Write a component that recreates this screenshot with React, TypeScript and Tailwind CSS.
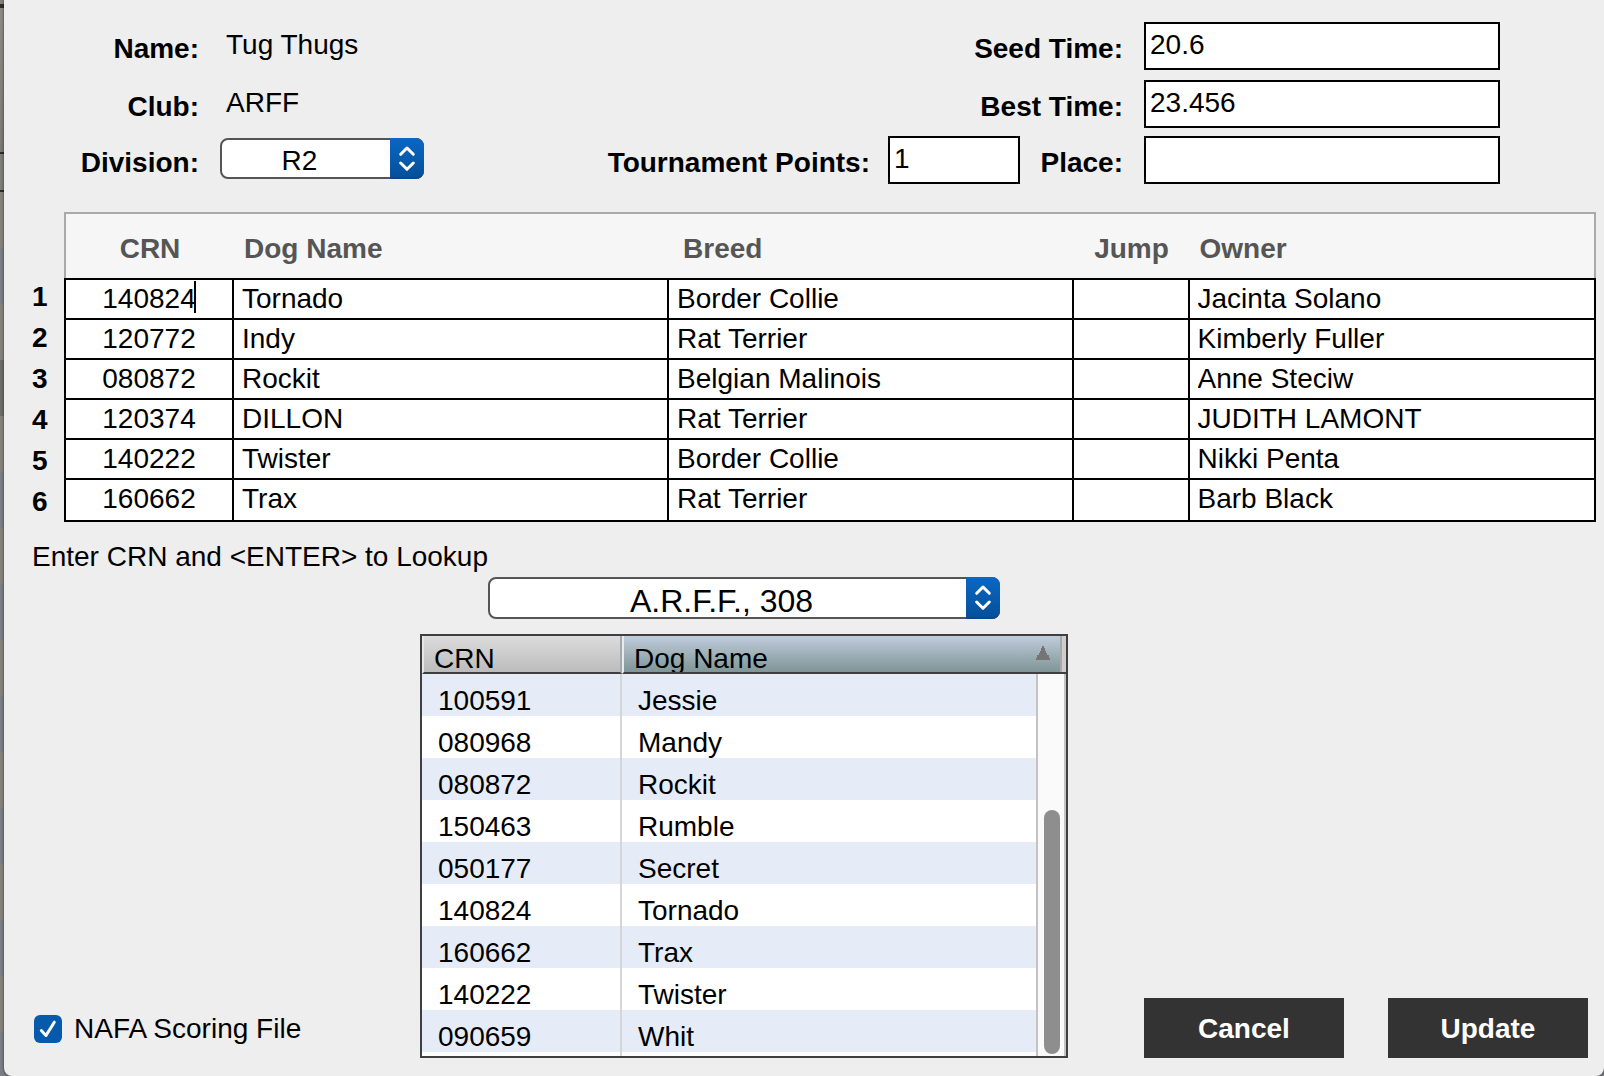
import React from "react";

const dogs = [
  { crn: "140824", name: "Tornado", breed: "Border Collie", owner: "Jacinta Solano" },
  { crn: "120772", name: "Indy", breed: "Rat Terrier", owner: "Kimberly Fuller" },
  { crn: "080872", name: "Rockit", breed: "Belgian Malinois", owner: "Anne Steciw" },
  { crn: "120374", name: "DILLON", breed: "Rat Terrier", owner: "JUDITH LAMONT" },
  { crn: "140222", name: "Twister", breed: "Border Collie", owner: "Nikki Penta" },
  { crn: "160662", name: "Trax", breed: "Rat Terrier", owner: "Barb Black" },
];

const clubDogs = [
  ["100591", "Jessie"],
  ["080968", "Mandy"],
  ["080872", "Rockit"],
  ["150463", "Rumble"],
  ["050177", "Secret"],
  ["140824", "Tornado"],
  ["160662", "Trax"],
  ["140222", "Twister"],
  ["090659", "Whit"],
];

// Sliver of the dimmed window that shows to the left of the sheet.
const backdropBands = [
  "h-1 bg-[#858179]",
  "h-1 bg-[#2e2d2c]",
  "h-36 bg-linear-to-b from-[#8d8a84] to-[#7c7974]",
  "h-[2px] bg-[#2b2a29]",
  "h-9 bg-[#7f7d78]",
  "h-[2px] bg-[#2b2a29]",
  "h-14 bg-[#85827c]",
  "h-14 bg-[#7b7f85]",
  "h-14 bg-[#85827c]",
  "h-14 bg-[#6e6c68]",
  "h-14 bg-[#85827c]",
  "h-14 bg-[#7b7f85]",
  "h-14 bg-[#85827c]",
  "h-14 bg-[#7b7f85]",
  "h-14 bg-[#85827c]",
  "h-14 bg-[#7b7f85]",
  "h-14 bg-[#85827c]",
  "h-14 bg-[#7b7f85]",
  "h-14 bg-[#85827c]",
  "h-14 bg-[#7b7f85]",
  "h-14 bg-[#85827c]",
  "flex-1 bg-[#7b7f85]",
];

const fieldClass =
  "h-12 shrink-0 rounded-none border-2 border-black bg-white px-1 pt-[5px] pb-[7px] leading-8 outline-none";

function Picker({
  id,
  label,
  value,
  className,
  selectClass,
}: {
  id: string;
  label?: string;
  value: string;
  className: string;
  selectClass: string;
}) {
  return (
    <div className={`relative ${className}`}>
      <select
        id={id}
        aria-label={label}
        defaultValue={value}
        className={`block w-full appearance-none rounded-lg border-2 border-[#555] bg-white pr-[45px] text-center outline-none [text-align-last:center] ${selectClass}`}
      >
        <option>{value}</option>
      </select>
      <span className="pointer-events-none absolute inset-y-0 right-0 flex w-[34px] items-center justify-center rounded-r-lg border-b-2 border-[#08488a] bg-linear-to-b from-[#0a67c4] to-[#06509a]">
        <svg viewBox="0 0 18 26" className="h-[26px] w-[18px]" fill="none" stroke="white" strokeWidth="3" strokeLinecap="round" strokeLinejoin="round" aria-hidden="true">
          <path d="M2.7 9.3 L9 3 L15.3 9.3" />
          <path d="M2.7 18 L9 24.3 L15.3 18" />
        </svg>
      </span>
    </div>
  );
}

function CellInput({ value, label, className = "" }: { value: string; label: string; className?: string }) {
  return (
    <input
      type="text"
      aria-label={label}
      defaultValue={value}
      className={`block h-[38px] w-full bg-transparent px-2 leading-[38px] outline-none ${className}`}
    />
  );
}

function TeamFields() {
  const label = "pt-[11px] font-bold";
  return (
    <section className="pr-[104px]">
      <div className="mb-[10px] flex h-12">
        <span className={`w-[195px] shrink-0 text-right ${label}`}>Name:</span>
        <span className="ml-[21px] pt-[7px] pl-[6px]">Tug Thugs</span>
        <label htmlFor="seed" className={`mr-[21px] ml-auto ${label}`}>Seed Time:</label>
        <input id="seed" type="text" defaultValue="20.6" className={`w-[356px] ${fieldClass}`} />
      </div>
      <div className="mb-2 flex h-12">
        <span className={`w-[195px] shrink-0 text-right ${label}`}>Club:</span>
        <span className="ml-[21px] pt-[7px] pl-[6px]">ARFF</span>
        <label htmlFor="best" className={`mr-[21px] ml-auto ${label}`}>Best Time:</label>
        <input id="best" type="text" defaultValue="23.456" className={`w-[356px] ${fieldClass}`} />
      </div>
      <div className="flex h-12">
        <label htmlFor="division" className={`w-[195px] shrink-0 text-right ${label}`}>Division:</label>
        <Picker id="division" value="R2" className="mt-[2px] ml-[21px] h-[41px] w-[204px] shrink-0" selectClass="h-[41px] pt-1 leading-8" />
        <label htmlFor="points" className={`mr-[18px] ml-auto ${label}`}>Tournament Points:</label>
        <input id="points" type="text" defaultValue="1" className={`w-[132px] ${fieldClass}`} />
        <label htmlFor="place" className={`mr-[21px] w-[103px] shrink-0 text-right ${label}`}>Place:</label>
        <input id="place" type="text" className={`w-[356px] ${fieldClass}`} />
      </div>
    </section>
  );
}

function TeamTable() {
  const head = "h-[66px] border-t-2 border-[#aaa] pt-[19px] pb-[13px] font-bold leading-8";
  return (
    <section className="mt-7 flex pr-2 pl-7">
      <ol className="w-8 shrink-0 pt-16 font-bold">
        {dogs.map((d, i) => (
          <li key={d.crn} className="h-[41px] leading-[41px]">{i + 1}</li>
        ))}
      </ol>
      <table className="min-w-0 flex-1 table-fixed border-separate border-spacing-0">
        <colgroup>
          <col className="w-[170px]" />
          <col className="w-[28.4%]" />
          <col className="w-[26.4%]" />
          <col className="w-[116px]" />
          <col />
        </colgroup>
        <thead className="bg-[#f6f6f6] text-left text-[#555]">
          <tr>
            <th scope="col" className={`border-l-2 text-center ${head}`}>CRN</th>
            <th scope="col" className={`pl-[10px] ${head}`}>Dog Name</th>
            <th scope="col" className={`pl-[14px] ${head}`}>Breed</th>
            <th scope="col" className={`text-center ${head}`}>Jump</th>
            <th scope="col" className={`border-r-2 pl-[10px] ${head}`}>Owner</th>
          </tr>
        </thead>
        <tbody className="bg-white">
          {dogs.map((d, i) => {
            const edge = i === 0 ? "border-t-2" : i === dogs.length - 1 ? "pb-[2px]" : "";
            const cell = `border-r-2 border-b-2 border-black ${edge}`;
            return (
              <tr key={d.crn}>
                <td className={`relative border-l-2 ${cell}`}>
                  <CellInput value={d.crn} label={`CRN ${i + 1}`} className="text-center" />
                  {i === 0 && <span className="absolute top-px left-1/2 ml-[45px] h-8 w-[2px] bg-black" />}
                </td>
                <td className={cell}><CellInput value={d.name} label={`Dog name ${i + 1}`} /></td>
                <td className={cell}><CellInput value={d.breed} label={`Breed ${i + 1}`} /></td>
                <td className={cell}><CellInput value="" label={`Jump ${i + 1}`} /></td>
                <td className={cell}><CellInput value={d.owner} label={`Owner ${i + 1}`} /></td>
              </tr>
            );
          })}
        </tbody>
      </table>
    </section>
  );
}

function ClubList() {
  return (
    <div className="relative border-2 border-[#3f3f41] bg-white">
      <table className="w-full table-fixed border-separate border-spacing-0">
        <colgroup>
          <col className="w-[200px]" />
          <col />
        </colgroup>
        <thead className="text-left">
          <tr>
            <th scope="col" className="border-r-2 border-b-2 border-l-2 border-r-[#a9a9a9] border-b-[#3f3f41] border-l-[#e6e6e6] bg-linear-to-b from-[#dcdcdc] to-[#bcbcbc] p-0 font-normal">
              <span className="block h-9 overflow-hidden pt-[7px] pl-[10px]">CRN</span>
            </th>
            <th scope="col" aria-sort="ascending" className="border-b-2 border-l-2 border-b-[#3f3f41] border-l-[#e6ebf0] bg-linear-to-b from-[#c0cddc] to-[#7f9596] p-0 font-normal">
              <span className="flex h-9 overflow-hidden">
                <span className="flex-1 pt-[7px] pl-[10px]">Dog Name</span>
                <svg viewBox="0 0 14 14" className="mt-[10px] mr-[10px] size-[14px]" fill="#757575" aria-hidden="true">
                  <path d="M6 0h2v2h1v3h1v2h1v2h2v3h1v2H0v-2h1V9h2V7h1V5h1V2h1z" />
                </svg>
                <span className="h-9 w-[6px] border-l-2 border-[#a9a9a9] bg-[#cfcdcc]" />
              </span>
            </th>
          </tr>
        </thead>
        <tbody>
          {clubDogs.map(([crn, name]) => (
            <tr key={crn} className="odd:bg-[#e6ecf7] even:bg-white">
              <td className="h-[42px] border-r-2 border-[#d6d6d6] p-0 pt-3 pl-4 leading-[30px]">{crn}</td>
              <td className="h-[42px] p-0 pt-3 pl-4 leading-[30px]">{name}</td>
            </tr>
          ))}
          <tr aria-hidden="true">
            <td className="h-1 border-r-2 border-[#d6d6d6] p-0" />
            <td className="h-1 p-0" />
          </tr>
        </tbody>
      </table>
      <div className="absolute top-[38px] right-0 bottom-0 flex w-[30px] flex-col items-center justify-end border-x-2 border-[#c3c3c3] bg-[#fafafa] pb-[2px] pl-[2px]">
        <div className="h-[244px] w-4 rounded-full bg-[#8e8e8e]" />
      </div>
    </div>
  );
}

export default function App() {
  const button = "h-[60px] w-[200px] bg-[#333] pt-[2px] font-bold text-white";
  return (
    <div className="flex min-h-screen bg-[#77797d] font-['Liberation_Sans',Arial,sans-serif] text-[28px] leading-8 text-black">
      <div className="flex w-1 shrink-0 flex-col" aria-hidden="true">
        {backdropBands.map((band, i) => (
          <div key={i} className={band} />
        ))}
      </div>
      <main className="min-w-0 flex-1 rounded-b-lg bg-[#eee] pt-[22px] pb-[18px] shadow-[0_0_3px_rgba(0,0,0,0.6)]">
        <TeamFields />
        <TeamTable />
        <p className="mt-[19px] pl-7">Enter CRN and &lt;ENTER&gt; to Lookup</p>
        <section className="mt-1 grid grid-cols-[416px_648px_1fr] items-end">
          <label className="mb-[13px] flex items-center gap-3 pl-[30px]">
            <span className="relative size-7 shrink-0">
              <input type="checkbox" defaultChecked className="block size-7 appearance-none rounded-md bg-[#065aac]" />
              <svg viewBox="0 0 28 28" className="pointer-events-none absolute inset-0 size-7" fill="none" stroke="white" strokeWidth="3" strokeLinecap="round" strokeLinejoin="round" aria-hidden="true">
                <path d="M7.3 15.5 L12 20.5 L20.3 7.2" />
              </svg>
            </span>
            NAFA Scoring File
          </label>
          <div>
            <Picker id="club" label="Club roster" value="A.R.F.F., 308" className="mx-auto mb-[15px] h-[42px] w-[512px]" selectClass="h-[42px] pt-1 text-[32px] leading-9" />
            <ClubList />
          </div>
          <div className="flex justify-end gap-11 pr-4">
            <button type="button" className={button}>Cancel</button>
            <button type="button" className={button}>Update</button>
          </div>
        </section>
      </main>
    </div>
  );
}
